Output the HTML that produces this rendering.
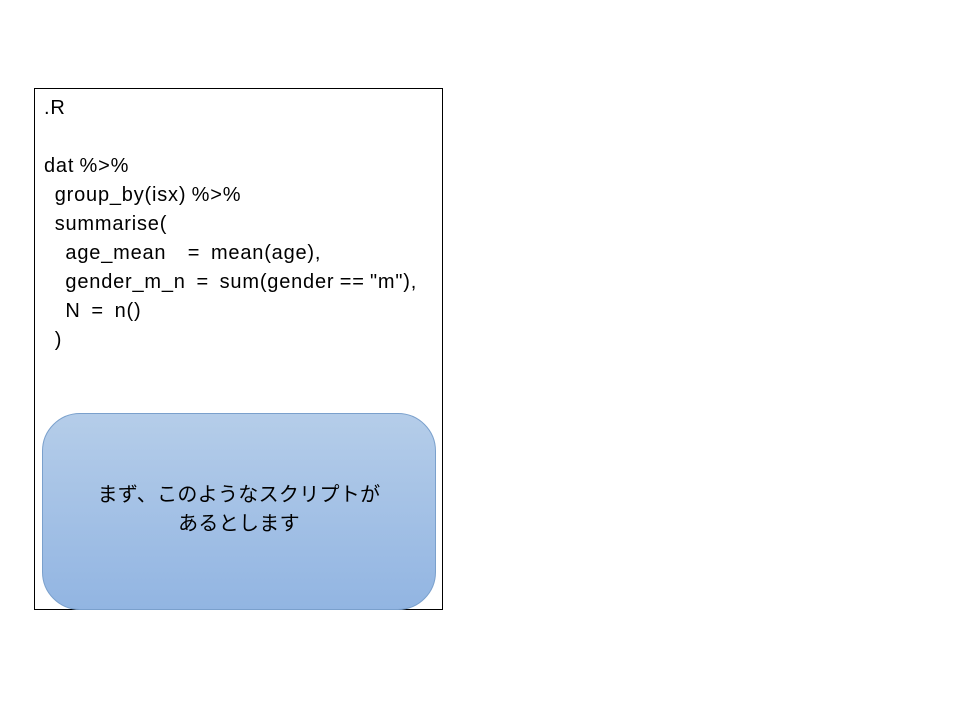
<!DOCTYPE html>
<html><head><meta charset="utf-8"><style>
body{margin:0;width:960px;height:720px;background:#fff;position:relative;overflow:hidden;font-family:"Liberation Sans","Noto Sans CJK JP",sans-serif;}
.box{position:absolute;left:34px;top:88px;width:407px;height:520px;border:1px solid #000;}
.code{position:absolute;left:44px;top:94px;font-size:20px;line-height:29px;white-space:pre;color:#000;letter-spacing:0.8px;word-spacing:-1px;}
.rr{position:absolute;left:42px;top:413px;width:392px;height:195px;border:1px solid #7aa0cc;border-radius:38px;background:linear-gradient(#b5cde9,#92b5e2);}
.jp{position:absolute;left:42px;top:481px;width:394px;text-align:center;font-size:20px;line-height:29px;color:#000;letter-spacing:0.3px;}
</style></head><body>
<div class="box"></div>
<div class="code">.R

dat %&gt;%
  group_by(isx) %&gt;%
  summarise(
    age_mean    =  mean(age),
    gender_m_n  =  sum(gender == "m"),
    N  =  n()
  )</div>
<div class="rr"></div>
<div class="jp">まず、このようなスクリプトが<br>あるとします</div>
</body></html>
